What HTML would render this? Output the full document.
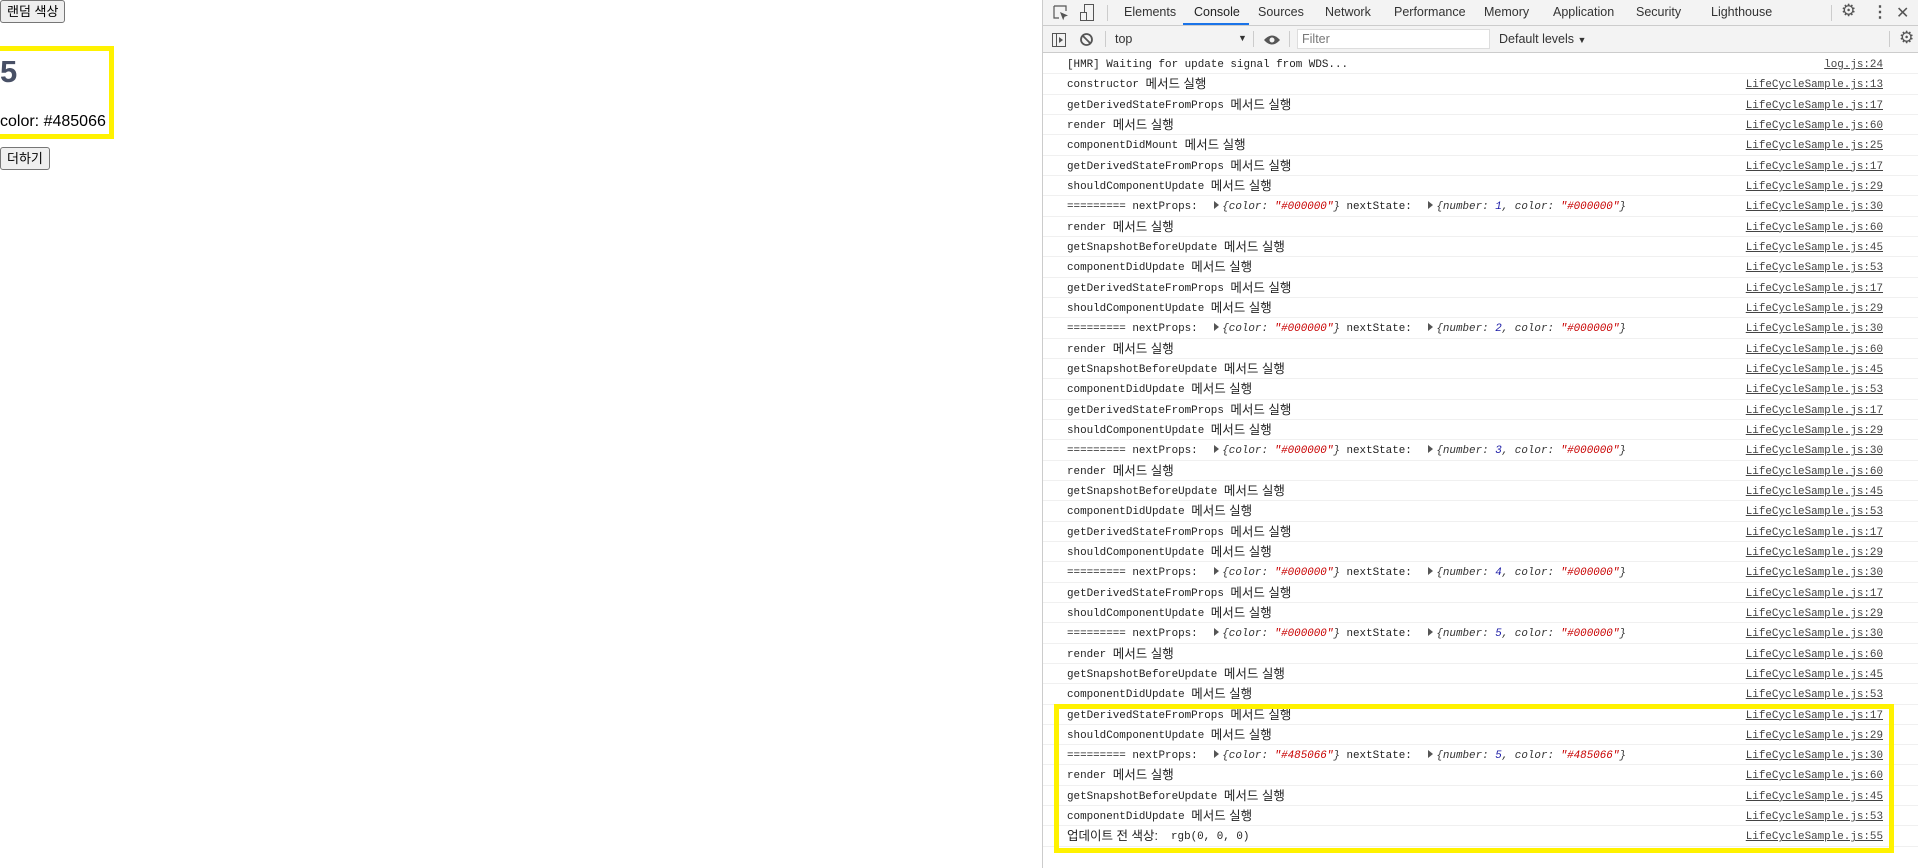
<!DOCTYPE html>
<html><head><meta charset="utf-8"><style>
*{box-sizing:border-box;margin:0;padding:0}
body{width:1918px;height:868px;background:#fff;font-family:"Liberation Sans","Noto Sans CJK KR",sans-serif;position:relative;overflow:hidden}
.btn{position:absolute;background:#efefef;border:1px solid #767676;border-radius:3px;font-size:13px;color:#000;padding:0 6px;height:23px;line-height:21px}
#box{position:absolute;left:0;top:46px;width:114px;height:93px;border:5px solid #fff200;border-left:none}
#box h1{position:absolute;left:0;top:3px;font-size:31px;color:#485066;font-weight:bold}
#box p{position:absolute;left:0;top:62px;font-size:16px;color:#000}
#dt{position:absolute;left:1042px;top:0;width:876px;height:868px;border-left:1px solid #ccc;background:#fff}
.tabs{height:26px;background:#f3f3f3;border-bottom:1px solid #ccc;position:relative;font-size:12.5px;color:#333}
.tabs span{position:absolute;top:5px}
.tb{height:27px;background:#f3f3f3;border-bottom:1px solid #ccc;position:relative;font-size:12.5px;color:#333}
.rows{position:absolute;top:54px;left:0;right:0}
.r{height:20.34px;border-bottom:1px solid #f0f0f0;position:relative;font-family:"Liberation Mono","Noto Sans CJK KR",monospace;font-size:10.9px;color:#222;line-height:22px;padding-left:24px;white-space:nowrap}
.r k{font-family:"Liberation Sans","Noto Sans CJK KR",sans-serif;font-size:12.5px;line-height:1;vertical-align:-1px}
.r a{position:absolute;right:35px;top:0;color:#444;text-decoration:underline}
.r i{color:#333}
.r s{text-decoration:none;color:#c80000}
.r b{font-weight:normal;color:#1a1aa6}
.tri{display:inline-block;width:0;height:0;border-left:5px solid #555;border-top:4px solid transparent;border-bottom:4px solid transparent;margin:0 3px 0 10px}
#yb{position:absolute;left:1054px;top:704px;width:840px;height:149px;border:5px solid #fff200}
</style></head><body>
<div class="btn" style="left:0;top:0">랜덤 색상</div>
<div id="box"><h1>5</h1><p>color: #485066</p></div>
<div class="btn" style="left:0;top:147px">더하기</div>

<div id="dt">
<div class="tabs">
<svg style="position:absolute;left:10px;top:5px" width="16" height="16"><path d="M1 1h12v5M1 1v12h5" stroke="#555" fill="none" stroke-width="1.2"/><path d="M7 7l8 3.5-3.5 1.2-1.3 3.5z" fill="#555"/></svg>
<svg style="position:absolute;left:36px;top:4px" width="16" height="18"><rect x="5.5" y="0.5" width="9" height="16" stroke="#555" fill="none"/><rect x="1.5" y="8.5" width="6" height="8" stroke="#555" fill="#f3f3f3"/></svg>
<div style="position:absolute;left:64px;top:5px;width:1px;height:16px;background:#ccc"></div>
<span style="left:81px">Elements</span>
<span style="left:151px;color:#222">Console</span>
<div style="position:absolute;left:140px;top:23px;width:66px;height:2px;background:#1a73e8"></div>
<span style="left:215px">Sources</span>
<span style="left:282px">Network</span>
<span style="left:351px">Performance</span>
<span style="left:441px">Memory</span>
<span style="left:510px">Application</span>
<span style="left:593px">Security</span>
<span style="left:668px">Lighthouse</span>
<div style="position:absolute;left:788px;top:5px;width:1px;height:16px;background:#ccc"></div>
<span style="left:798px;top:1px;font-size:17px;color:#555">⚙</span>
<span style="left:829px;top:2px;font-size:16px;color:#555;font-weight:bold">⋮</span>
<span style="left:853px;top:3px;font-size:16px;color:#555">✕</span>
</div>
<div class="tb">
<svg style="position:absolute;left:9px;top:7px" width="14" height="14"><rect x="0.5" y="0.5" width="13" height="13" stroke="#555" fill="none"/><line x1="4.5" y1="1" x2="4.5" y2="13" stroke="#555"/><path d="M7 4l4 3-4 3z" fill="#555"/></svg>
<svg style="position:absolute;left:36px;top:6px" width="15" height="15"><circle cx="7.5" cy="7.5" r="5.5" stroke="#555" stroke-width="1.8" fill="none"/><line x1="3.5" y1="3.5" x2="11.5" y2="11.5" stroke="#555" stroke-width="1.8"/></svg>
<div style="position:absolute;left:62px;top:5px;width:1px;height:16px;background:#ccc"></div>
<span style="position:absolute;left:72px;top:6px">top</span>
<span style="position:absolute;left:195px;top:7px;font-size:9px">▼</span>
<div style="position:absolute;left:210px;top:5px;width:1px;height:16px;background:#ccc"></div>
<svg style="position:absolute;left:220px;top:8px" width="18" height="12"><path d="M1 6q8-9 16 0q-8 9-16 0z" fill="#555"/><circle cx="9" cy="6" r="2.5" fill="#f3f3f3"/></svg>
<div style="position:absolute;left:246px;top:5px;width:1px;height:16px;background:#ccc"></div>
<div style="position:absolute;left:254px;top:3px;width:193px;height:20px;background:#fff;border:1px solid #ddd;font-size:12.5px;color:#777;padding:2px 4px">Filter</div>
<span style="position:absolute;left:456px;top:6px">Default levels <span style="font-size:9px">▼</span></span>
<div style="position:absolute;left:846px;top:5px;width:1px;height:16px;background:#ccc"></div>
<span style="position:absolute;left:856px;top:2px;font-size:17px;color:#555">⚙</span>
</div>
<div class="rows">
<div class="r">[HMR] Waiting for update signal from WDS...<a>log.js:24</a></div>
<div class="r">constructor <k>메서드 실행</k><a>LifeCycleSample.js:13</a></div>
<div class="r">getDerivedStateFromProps <k>메서드 실행</k><a>LifeCycleSample.js:17</a></div>
<div class="r">render <k>메서드 실행</k><a>LifeCycleSample.js:60</a></div>
<div class="r">componentDidMount <k>메서드 실행</k><a>LifeCycleSample.js:25</a></div>
<div class="r">getDerivedStateFromProps <k>메서드 실행</k><a>LifeCycleSample.js:17</a></div>
<div class="r">shouldComponentUpdate <k>메서드 실행</k><a>LifeCycleSample.js:29</a></div>
<div class="r">========= nextProps: <span class="tri"></span><i>{color: <s>"#000000"</s>}</i> nextState: <span class="tri"></span><i>{number: <b>1</b>, color: <s>"#000000"</s>}</i><a>LifeCycleSample.js:30</a></div>
<div class="r">render <k>메서드 실행</k><a>LifeCycleSample.js:60</a></div>
<div class="r">getSnapshotBeforeUpdate <k>메서드 실행</k><a>LifeCycleSample.js:45</a></div>
<div class="r">componentDidUpdate <k>메서드 실행</k><a>LifeCycleSample.js:53</a></div>
<div class="r">getDerivedStateFromProps <k>메서드 실행</k><a>LifeCycleSample.js:17</a></div>
<div class="r">shouldComponentUpdate <k>메서드 실행</k><a>LifeCycleSample.js:29</a></div>
<div class="r">========= nextProps: <span class="tri"></span><i>{color: <s>"#000000"</s>}</i> nextState: <span class="tri"></span><i>{number: <b>2</b>, color: <s>"#000000"</s>}</i><a>LifeCycleSample.js:30</a></div>
<div class="r">render <k>메서드 실행</k><a>LifeCycleSample.js:60</a></div>
<div class="r">getSnapshotBeforeUpdate <k>메서드 실행</k><a>LifeCycleSample.js:45</a></div>
<div class="r">componentDidUpdate <k>메서드 실행</k><a>LifeCycleSample.js:53</a></div>
<div class="r">getDerivedStateFromProps <k>메서드 실행</k><a>LifeCycleSample.js:17</a></div>
<div class="r">shouldComponentUpdate <k>메서드 실행</k><a>LifeCycleSample.js:29</a></div>
<div class="r">========= nextProps: <span class="tri"></span><i>{color: <s>"#000000"</s>}</i> nextState: <span class="tri"></span><i>{number: <b>3</b>, color: <s>"#000000"</s>}</i><a>LifeCycleSample.js:30</a></div>
<div class="r">render <k>메서드 실행</k><a>LifeCycleSample.js:60</a></div>
<div class="r">getSnapshotBeforeUpdate <k>메서드 실행</k><a>LifeCycleSample.js:45</a></div>
<div class="r">componentDidUpdate <k>메서드 실행</k><a>LifeCycleSample.js:53</a></div>
<div class="r">getDerivedStateFromProps <k>메서드 실행</k><a>LifeCycleSample.js:17</a></div>
<div class="r">shouldComponentUpdate <k>메서드 실행</k><a>LifeCycleSample.js:29</a></div>
<div class="r">========= nextProps: <span class="tri"></span><i>{color: <s>"#000000"</s>}</i> nextState: <span class="tri"></span><i>{number: <b>4</b>, color: <s>"#000000"</s>}</i><a>LifeCycleSample.js:30</a></div>
<div class="r">getDerivedStateFromProps <k>메서드 실행</k><a>LifeCycleSample.js:17</a></div>
<div class="r">shouldComponentUpdate <k>메서드 실행</k><a>LifeCycleSample.js:29</a></div>
<div class="r">========= nextProps: <span class="tri"></span><i>{color: <s>"#000000"</s>}</i> nextState: <span class="tri"></span><i>{number: <b>5</b>, color: <s>"#000000"</s>}</i><a>LifeCycleSample.js:30</a></div>
<div class="r">render <k>메서드 실행</k><a>LifeCycleSample.js:60</a></div>
<div class="r">getSnapshotBeforeUpdate <k>메서드 실행</k><a>LifeCycleSample.js:45</a></div>
<div class="r">componentDidUpdate <k>메서드 실행</k><a>LifeCycleSample.js:53</a></div>
<div class="r">getDerivedStateFromProps <k>메서드 실행</k><a>LifeCycleSample.js:17</a></div>
<div class="r">shouldComponentUpdate <k>메서드 실행</k><a>LifeCycleSample.js:29</a></div>
<div class="r">========= nextProps: <span class="tri"></span><i>{color: <s>"#485066"</s>}</i> nextState: <span class="tri"></span><i>{number: <b>5</b>, color: <s>"#485066"</s>}</i><a>LifeCycleSample.js:30</a></div>
<div class="r">render <k>메서드 실행</k><a>LifeCycleSample.js:60</a></div>
<div class="r">getSnapshotBeforeUpdate <k>메서드 실행</k><a>LifeCycleSample.js:45</a></div>
<div class="r">componentDidUpdate <k>메서드 실행</k><a>LifeCycleSample.js:53</a></div>
<div class="r"><k>업데이트 전 색상:</k>&nbsp; rgb(0, 0, 0)<a>LifeCycleSample.js:55</a></div>
</div>
</div>
<div id="yb"></div>
</body></html>
